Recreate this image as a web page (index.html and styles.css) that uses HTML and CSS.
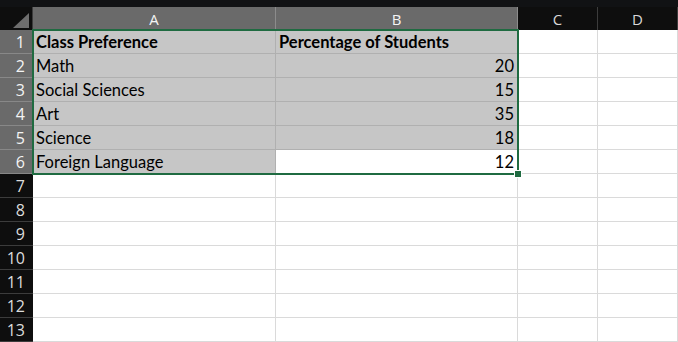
FILE: index.html
```html
<!DOCTYPE html>
<html lang="en">
	<head>
		<meta charset="UTF-8" />
		<title>Class Preference</title>
		<link rel="stylesheet" href="styles.css">
	</head>
	<body>
		<div class="topbar"></div>
		<div class="sheet">
			<div class="corner"><span class="corner-tri"></span></div>
			<div class="colhead sel">A</div>
			<div class="colhead sel">B</div>
			<div class="colhead">C</div>
			<div class="colhead">D</div>

			<div class="rowhead sel">1</div>
			<div class="cell sel bold">Class Preference</div>
			<div class="cell sel bold">Percentage of Students</div>
			<div class="cell"></div>
			<div class="cell"></div>

			<div class="rowhead sel">2</div>
			<div class="cell sel">Math</div>
			<div class="cell sel num">20</div>
			<div class="cell"></div>
			<div class="cell"></div>

			<div class="rowhead sel">3</div>
			<div class="cell sel">Social Sciences</div>
			<div class="cell sel num">15</div>
			<div class="cell"></div>
			<div class="cell"></div>

			<div class="rowhead sel">4</div>
			<div class="cell sel">Art</div>
			<div class="cell sel num">35</div>
			<div class="cell"></div>
			<div class="cell"></div>

			<div class="rowhead sel">5</div>
			<div class="cell sel">Science</div>
			<div class="cell sel num">18</div>
			<div class="cell"></div>
			<div class="cell"></div>

			<div class="rowhead sel">6</div>
			<div class="cell sel">Foreign Language</div>
			<div class="cell num">12</div>
			<div class="cell"></div>
			<div class="cell"></div>

			<div class="rowhead">7</div>
			<div class="cell"></div><div class="cell"></div><div class="cell"></div><div class="cell"></div>
			<div class="rowhead">8</div>
			<div class="cell"></div><div class="cell"></div><div class="cell"></div><div class="cell"></div>
			<div class="rowhead">9</div>
			<div class="cell"></div><div class="cell"></div><div class="cell"></div><div class="cell"></div>
			<div class="rowhead">10</div>
			<div class="cell"></div><div class="cell"></div><div class="cell"></div><div class="cell"></div>
			<div class="rowhead">11</div>
			<div class="cell"></div><div class="cell"></div><div class="cell"></div><div class="cell"></div>
			<div class="rowhead">12</div>
			<div class="cell"></div><div class="cell"></div><div class="cell"></div><div class="cell"></div>
			<div class="rowhead">13</div>
			<div class="cell"></div><div class="cell"></div><div class="cell"></div><div class="cell"></div>

			<!-- selection outline A1:B6 -->
			<div class="selection"><span class="handle"></span></div>
		</div>
	</body>
</html>
```

FILE: styles.css
```css
html, body {
	margin: 0;
	padding: 0;
	background: #ffffff;
	overflow: hidden;
}
body {
	width: 678px;
	height: 342px;
	font-family: Lato, "Open Sans", sans-serif;
}
.topbar {
	height: 7px;
	background: #111214;
}
.sheet {
	position: relative;
	display: grid;
	grid-template-columns: 33px 243px 242px 80px 80px;
	grid-template-rows: 23px repeat(13, 24px);
}
.corner {
	position: relative;
	background: #0e0e0e;
	border-right: 1px solid #3c3c3c;
	box-sizing: border-box;
}
.corner-tri {
	position: absolute;
	right: 3px;
	bottom: 2px;
	width: 0;
	height: 0;
	border-left: 16px solid transparent;
	border-bottom: 15px solid #6e6e6e;
}
.colhead {
	background: #0e0e0e;
	color: #d8d8d8;
	font-family: "Open Sans", sans-serif;
	font-size: 15px;
	display: flex;
	align-items: center;
	justify-content: center;
	border-right: 1px solid #3c3c3c;
	box-sizing: border-box;
}
.colhead.sel {
	background: #6a6a6a;
	color: #f4f4f4;
	border-right-color: #8c8c8c;
}
.rowhead {
	background: #0e0e0e;
	color: #dcdcdc;
	font-family: "Open Sans", sans-serif;
	font-size: 16px;
	display: flex;
	align-items: center;
	justify-content: flex-end;
	padding-right: 8px;
	border-bottom: 1px solid #3c3c3c;
	box-sizing: border-box;
}
.rowhead.sel {
	background: #6a6a6a;
	color: #f4f4f4;
	border-bottom-color: #888888;
}
.cell {
	font-size: 16.5px;
	color: #000000;
	display: flex;
	align-items: center;
	padding: 1px 3px 0 3px;
	white-space: nowrap;
	border-right: 1px solid #dadada;
	border-bottom: 1px solid #dadada;
	box-sizing: border-box;
}
.cell.sel {
	background: #c6c6c6;
	border-color: #b0b0b0;
}
.cell.bold {
	font-weight: bold;
}
.cell.num {
	justify-content: flex-end;
}
.selection {
	position: absolute;
	left: 32px;
	top: 22px;
	width: 487px;
	height: 146px;
	border: 2px solid #1f6b41;
	box-sizing: border-box;
	pointer-events: none;
}
.handle {
	position: absolute;
	right: -5px;
	bottom: -5px;
	width: 6px;
	height: 6px;
	background: #1f6b41;
	border: 1px solid #ffffff;
}
```
